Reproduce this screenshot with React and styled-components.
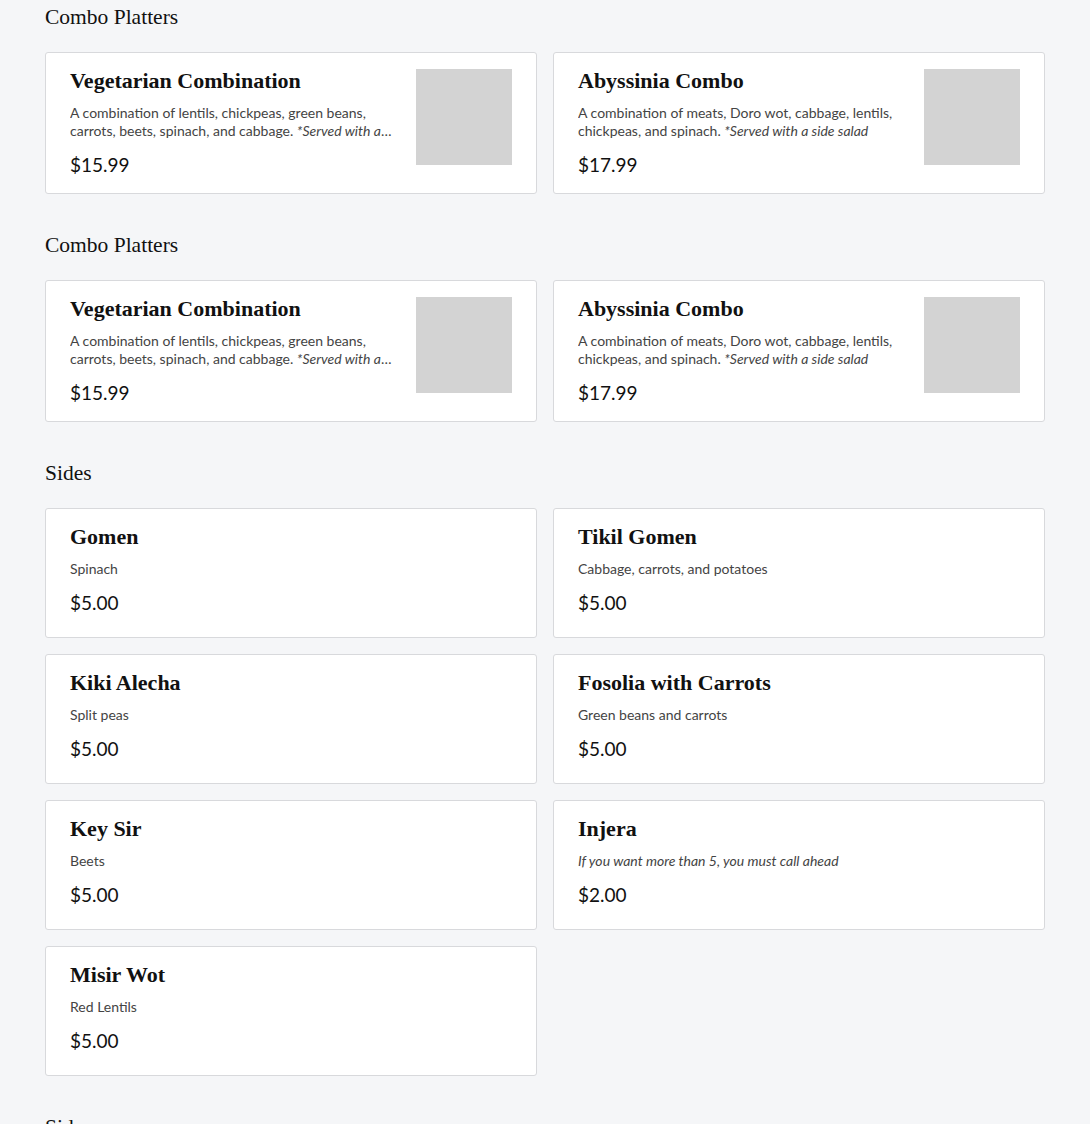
import React from "react";
import styled, { createGlobalStyle } from "styled-components";

const GlobalStyle = createGlobalStyle`
  body {
    margin: 0;
    background-color: #f5f6f8;
    font-family: Lato, "Noto Sans", sans-serif;
    color: #111111;
  }
`;

const combos = [
  {
    name: "Vegetarian Combination",
    desc: "A combination of lentils, chickpeas, green beans, carrots, beets, spinach, and cabbage.",
    note: "*Served with a side salad",
    price: "$15.99",
  },
  {
    name: "Abyssinia Combo",
    desc: "A combination of meats, Doro wot, cabbage, lentils, chickpeas, and spinach.",
    note: "*Served with a side salad",
    price: "$17.99",
  },
];

const sides = [
  { name: "Gomen", desc: "Spinach", price: "$5.00" },
  { name: "Tikil Gomen", desc: "Cabbage, carrots, and potatoes", price: "$5.00" },
  { name: "Kiki Alecha", desc: "Split peas", price: "$5.00" },
  { name: "Fosolia with Carrots", desc: "Green beans and carrots", price: "$5.00" },
  { name: "Key Sir", desc: "Beets", price: "$5.00" },
  {
    name: "Injera",
    note: "If you want more than 5, you must call ahead",
    price: "$2.00",
  },
  { name: "Misir Wot", desc: "Red Lentils", price: "$5.00" },
];

const sections = [
  { title: "Combo Platters", items: combos, image: true },
  { title: "Combo Platters", items: combos, image: true },
  { title: "Sides", items: sides, image: false },
  { title: "Sides", items: sides, image: false },
];

export default function App() {
  return (
    <>
      <GlobalStyle />
      <Page>
        {sections.map((section, i) => (
          <Section key={i}>
            <SectionTitle>{section.title}</SectionTitle>
            <Grid>
              {section.items.map((item, j) => (
                <Card key={j} $plain={!section.image}>
                  <Info>
                    <ItemName>{item.name}</ItemName>
                    <Description $clamp={section.image}>
                      {item.desc}
                      {item.desc && item.note ? " " : ""}
                      {item.note && <Note>{item.note}</Note>}
                    </Description>
                    <Price>{item.price}</Price>
                  </Info>
                  {section.image && <Thumb />}
                </Card>
              ))}
            </Grid>
          </Section>
        ))}
      </Page>
    </>
  );
}

const Page = styled.div`
  max-width: 1000px;
  margin: 0 auto;
  padding: 3px 0 40px;
  display: flex;
  flex-direction: column;
  gap: 37px;
`;

const Section = styled.section`
  display: flex;
  flex-direction: column;
  gap: 21px;
`;

const SectionTitle = styled.h2`
  margin: 0;
  font-family: "Liberation Serif", "DejaVu Serif", serif;
  font-weight: 400;
  font-size: 21.5px;
  line-height: 28px;
  color: #111111;
`;

const Grid = styled.div`
  display: grid;
  grid-template-columns: 1fr 1fr;
  gap: 16px;
`;

const Card = styled.div`
  display: flex;
  align-items: flex-start;
  gap: 24px;
  padding: 16px 24px 15px;
  min-height: ${(p) => (p.$plain ? "130px" : "auto")};
  box-sizing: border-box;
  background-color: #ffffff;
  border: 1px solid #d8d9dc;
  border-radius: 3px;
`;

const Info = styled.div`
  flex: 1;
  min-width: 0;
  display: flex;
  flex-direction: column;
`;

const ItemName = styled.h3`
  margin: 0;
  font-family: "Liberation Serif", "DejaVu Serif", serif;
  font-weight: 700;
  font-size: 22px;
  line-height: 23px;
  color: #111111;
`;

const Description = styled.p`
  margin: 12px 0 0;
  font-size: 14px;
  line-height: 18px;
  color: #444444;
  ${(p) =>
    p.$clamp &&
    `
    display: -webkit-box;
    -webkit-line-clamp: 2;
    -webkit-box-orient: vertical;
    overflow: hidden;
  `}
`;

const Note = styled.em`
  font-style: italic;
`;

const Price = styled.div`
  margin-top: 12px;
  font-size: 19px;
  line-height: 26px;
  color: #111111;
`;

const Thumb = styled.div`
  flex: none;
  width: 96px;
  height: 96px;
  background-color: #d3d3d3;
`;
